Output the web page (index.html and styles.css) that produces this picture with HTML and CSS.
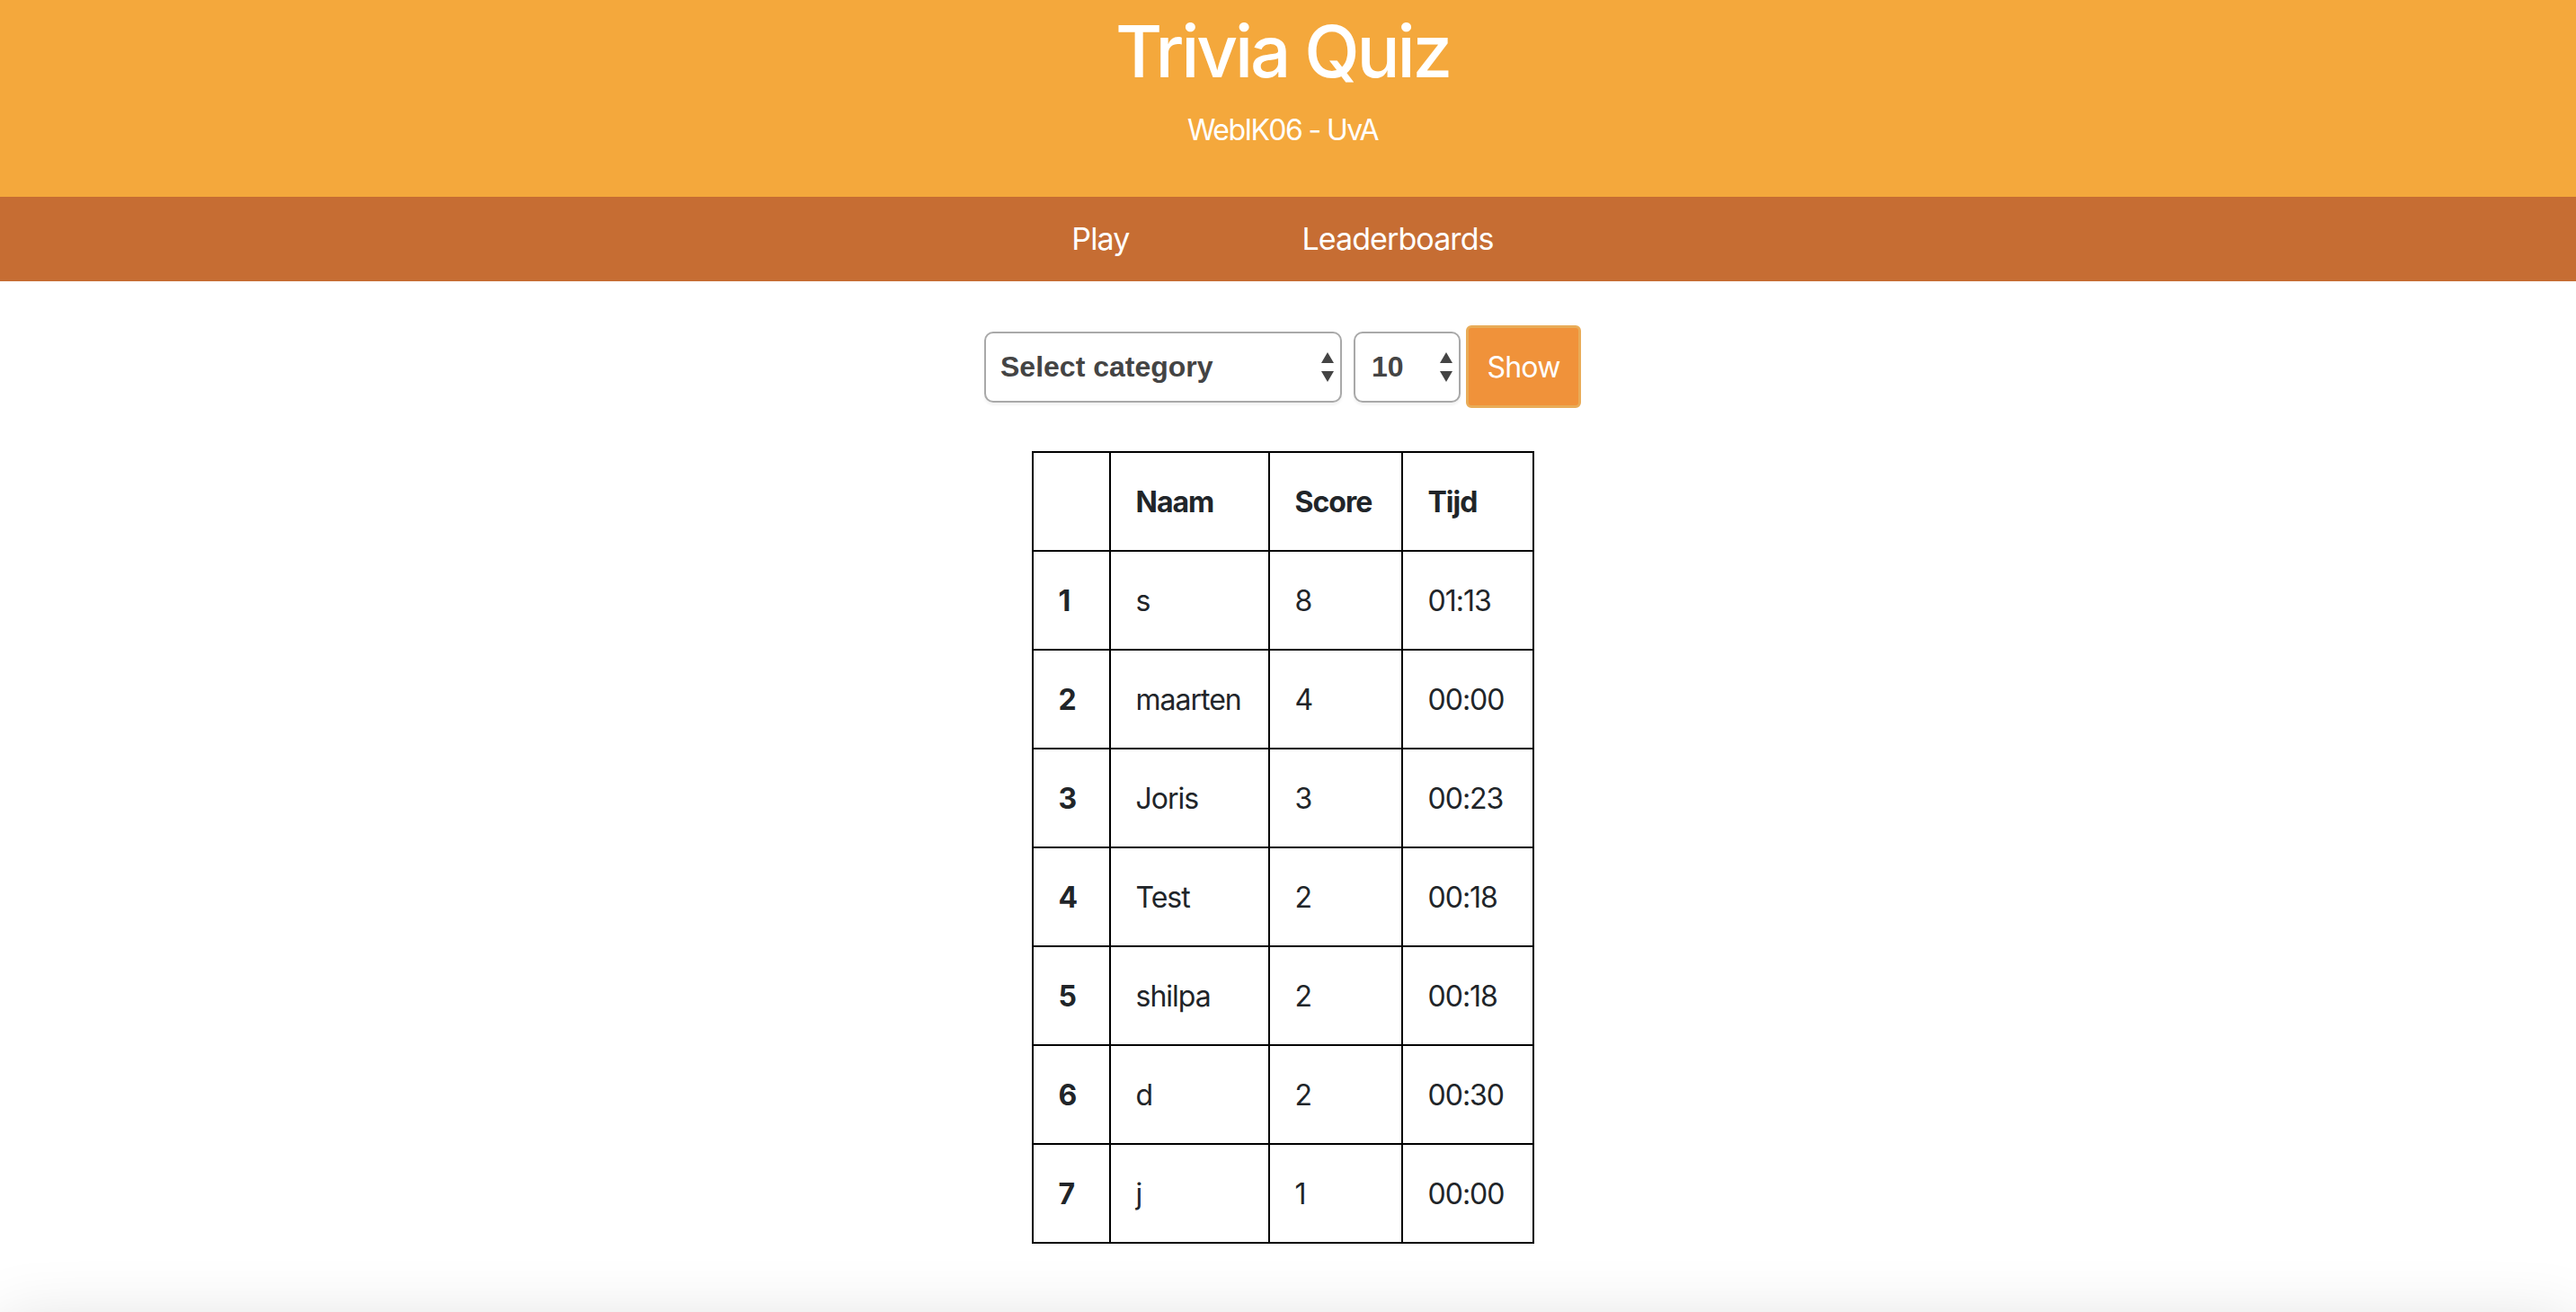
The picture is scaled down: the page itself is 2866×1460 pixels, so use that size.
FILE: index.html
```html
<!DOCTYPE html>
<html lang="nl">
<head>
<meta charset="utf-8">
<title>Trivia Quiz</title>
<link rel="stylesheet" href="styles.css">
</head>
<body>
<div class="page">
  <header class="hero">
    <h1 class="hero-title">Trivia Quiz</h1>
    <p class="hero-sub">WebIK06 - UvA</p>
  </header>
  <nav class="menu">
    <a class="menu-link" href="#">Play</a>
    <a class="menu-link" href="#">Leaderboards</a>
  </nav>
  <main class="content">
    <form class="controls">
      <span class="select-wrap select-cat">
        <select class="select">
          <option>Select category</option>
        </select>
        <svg class="arrows" width="16" height="34" viewBox="0 0 16 34"><path d="M8 0 L15 12 L1 12 Z" fill="#444"/><path d="M1 21 L15 21 L8 33 Z" fill="#444"/></svg>
      </span>
      <span class="select-wrap select-num">
        <select class="select">
          <option>10</option>
        </select>
        <svg class="arrows" width="16" height="34" viewBox="0 0 16 34"><path d="M8 0 L15 12 L1 12 Z" fill="#444"/><path d="M1 21 L15 21 L8 33 Z" fill="#444"/></svg>
      </span>
      <button type="button" class="show-btn">Show</button>
    </form>
    <table class="board">
      <colgroup>
        <col class="c-rank"><col class="c-name"><col class="c-score"><col class="c-time">
      </colgroup>
      <thead>
        <tr><th></th><th>Naam</th><th>Score</th><th>Tijd</th></tr>
      </thead>
      <tbody>
        <tr><th>1</th><td>s</td><td>8</td><td>01:13</td></tr>
        <tr><th>2</th><td>maarten</td><td>4</td><td>00:00</td></tr>
        <tr><th>3</th><td>Joris</td><td>3</td><td>00:23</td></tr>
        <tr><th>4</th><td>Test</td><td>2</td><td>00:18</td></tr>
        <tr><th>5</th><td>shilpa</td><td>2</td><td>00:18</td></tr>
        <tr><th>6</th><td>d</td><td>2</td><td>00:30</td></tr>
        <tr><th>7</th><td>j</td><td>1</td><td>00:00</td></tr>
      </tbody>
    </table>
  </main>
  <div class="footer-shade"></div>
</div>
</body>
</html>
```

FILE: styles.css
```css
html, body {
  margin: 0;
  padding: 0;
  background: #fff;
}

body {
  font-family: Inter, "Noto Sans", "DejaVu Sans", sans-serif;
  color: #212529;
}

.page {
  position: relative;
  height: 1460px;
  overflow: hidden;
}

.hero {
  background: #f4a83c;
  color: #fff;
  text-align: center;
  padding: 9px 12px 51px 0;
  height: 159px;
}

.hero-title {
  margin: 0 0 16px;
  font-size: 80px;
  line-height: 96px;
  font-weight: 500;
  letter-spacing: -3.2px;
}

.hero-sub {
  margin: 0;
  font-size: 32px;
  line-height: 48px;
  font-weight: 400;
  letter-spacing: -1.6px;
}

.menu {
  background: #c66d33;
  height: 94px;
  display: flex;
  justify-content: center;
  align-items: center;
  padding-right: 12px;
}

.menu-link {
  color: #fff;
  text-decoration: none;
  font-size: 34px;
  line-height: 54px;
  padding: 0 96px;
  letter-spacing: -0.9px;
}

.content {
  padding: 49px 12px 0 0;
  display: flex;
  flex-direction: column;
  align-items: center;
}

.controls {
  display: flex;
  align-items: center;
  margin: 0 0 48px;
}

.select-wrap {
  position: relative;
  display: block;
}

.select {
  appearance: none;
  -webkit-appearance: none;
  display: block;
  height: 79px;
  border: 2px solid #a9a9a9;
  border-radius: 10px;
  background: #fff;
  font-family: "Liberation Sans", Arial, sans-serif;
  font-weight: 700;
  font-size: 32px;
  color: #444;
  padding: 0 0 0 16px;
  box-shadow: 0 3px 3px rgba(0, 0, 0, 0.05);
  margin: 0;
}

.select-cat .select {
  width: 398px;
}

.select-num {
  margin-left: 13px;
}

.select-num .select {
  width: 119px;
  padding-left: 18px;
}

.arrows {
  position: absolute;
  right: 8px;
  top: 23px;
  pointer-events: none;
}

.show-btn {
  margin-left: 6px;
  width: 128px;
  height: 92px;
  background: #f0923a;
  border: 3px solid #e9ac58;
  border-radius: 6px;
  color: #fff;
  font-family: Inter, "Noto Sans", sans-serif;
  font-size: 32px;
  padding: 0;
  letter-spacing: -0.8px;
}

.board {
  border-collapse: collapse;
  table-layout: fixed;
  width: 557px;
  border: 2px solid #000;
  font-size: 32px;
  line-height: 48px;
  letter-spacing: -1px;
}

.c-rank { width: 86px; }
.c-name { width: 177px; }
.c-score { width: 148px; }
.c-time { width: 146px; }

.board th,
.board td {
  border: 2px solid #000;
  padding: 31px 0 29px 28px;
  text-align: left;
  vertical-align: middle;
  white-space: nowrap;
}

.board th {
  font-weight: 700;
}

.board td {
  font-weight: 400;
}

.footer-shade {
  position: absolute;
  left: 0;
  right: 0;
  top: 1478px;
  height: 200px;
  box-shadow: 0 0 80px rgba(0, 0, 0, 0.16);
}
```
